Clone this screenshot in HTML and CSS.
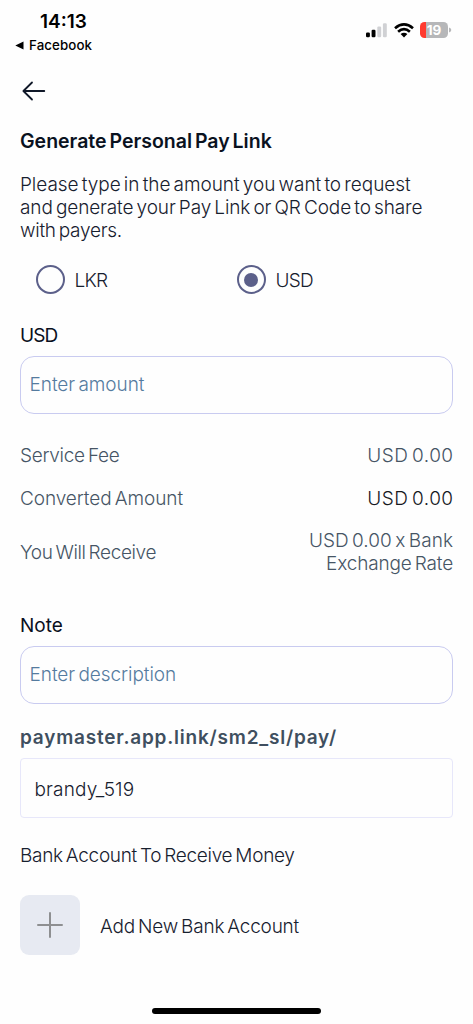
FILE: index.html
```html
<!DOCTYPE html>
<html lang="en">
<head>
<meta charset="utf-8">
<title>Generate Personal Pay Link</title>
<link rel="stylesheet" href="styles.css">
</head>
<body>
<div class="screen">
  <header class="status">
    <div class="status-left">
      <div class="clock">14:13</div>
      <div class="back-app"><svg width="9" height="9" viewBox="0 0 9 9"><path d="M0.3 4.5 8.5 0.6V8.4Z" fill="#000"/></svg><span>Facebook</span></div>
    </div>
    <div class="status-right">
      <svg class="signal" width="21" height="15" viewBox="0 0 21 15"><rect x="0" y="9.4" width="3.9" height="4.8" rx="1.2" fill="#000"/><rect x="5.6" y="6.8" width="3.9" height="7.4" rx="1.2" fill="#000"/><rect x="11.3" y="3.6" width="3.9" height="10.6" rx="1.2" fill="#d0d1d4"/><rect x="16.9" y="0.2" width="3.9" height="14" rx="1.2" fill="#d0d1d4"/></svg>
      <svg class="wifi" width="20" height="15" viewBox="0 0 20 15"><g fill="none" stroke="#000" stroke-width="2.7"><path d="M1 5.2Q10-2.4 19 5.2"/><path d="M4.1 8.7Q10 3.6 15.9 8.7"/></g><path d="M6.6 11Q10 8.3 13.4 11L10 14.5Z" fill="#000"/></svg>
      <div class="battery"><span>19</span></div>
      <svg class="tip" width="3" height="6" viewBox="0 0 3 6"><path d="M0 0.5Q2.3 1.3 2.3 3T0 5.5Z" fill="#b6b7b9"/></svg>
    </div>
  </header>
  <nav class="nav"><svg width="24" height="20" viewBox="0 0 24 20"><path d="M22.3 10H1.6M10 1.5 1.4 10 10 18.5" fill="none" stroke="#101828" stroke-width="1.8" stroke-linecap="round" stroke-linejoin="round"/></svg></nav>
  <main class="content">
    <h1 class="title">Generate Personal Pay Link</h1>
    <p class="intro"><span class="intro-a">Please type in the amount you want to request</span><br><span class="intro-b">and generate your Pay Link or QR Code to share</span><br><span class="intro-c">with payers.</span></p>
    <div class="radios">
      <div class="radio"><i class="ring"></i><span class="caps">LKR</span></div>
      <div class="radio"><i class="ring on"></i><span class="caps">USD</span></div>
    </div>
    <div class="label currency">USD</div>
    <div class="field"><span>Enter amount</span></div>
    <div class="row fee"><span class="k-fee">Service Fee</span><span class="money">USD 0.00</span></div>
    <div class="row converted"><span class="k-conv">Converted Amount</span><span class="money dark">USD 0.00</span></div>
    <div class="row receive"><span class="k-recv">You Will Receive</span><span class="rate"><span class="rate-a">USD 0.00 x Bank</span><br><span class="rate-b">Exchange Rate</span></span></div>
    <div class="label note">Note</div>
    <div class="field"><span>Enter description</span></div>
    <div class="link">paymaster.app.link/sm2_sl/pay/</div>
    <div class="handle"><span>brandy_519</span></div>
    <div class="bank-title">Bank Account To Receive Money</div>
    <div class="add"><div class="plus"><svg width="26" height="26" viewBox="0 0 26 26"><path d="M13 1V25M1 13H25" stroke="#8e8f91" stroke-width="2" stroke-linecap="round"/></svg></div><span class="add-text">Add New Bank Account</span></div>
  </main>
  <div class="home"></div>
</div>
</body>
</html>
```
FILE: styles.css
```css
* { box-sizing: border-box; }
body { margin: 0; background: #fefefe; }
.screen { width: 473px; height: 1024px; display: flex; flex-direction: column; font: 340 19px/23px Inter, "Liberation Sans", sans-serif; color: #17202e; word-spacing: -2px; white-space: nowrap; overflow: hidden; }
.status { height: 60px; display: flex; justify-content: space-between; padding: 10px 21px 0 15px; color: #000; }
.clock { font-size: 19px; font-weight: 600; padding-left: 25px; line-height: 24px; }
.back-app { display: flex; align-items: center; gap: 5px; font-size: 13.3px; font-weight: 500; line-height: 22px; letter-spacing: .1px; }
.status-right { display: flex; height: 40px; align-items: center; }
.wifi { margin-left: 7px; }
.battery { margin-left: 6px; width: 28px; height: 16px; border-radius: 4.5px; background: linear-gradient(to right, #ff3b30 6px, #b6b7b9 6px); color: #fff; font-size: 13.5px; font-weight: 700; line-height: 16px; text-align: center; }
.tip { margin-left: 1px; }
.nav { height: 70px; padding: 21px 0 0 22px; }
.nav svg { display: block; }
.content { padding: 0 20px; flex: 1; }
.title { margin: 0; font-size: 19.5px; font-weight: 600; line-height: 23px; color: #0a121f; }
.intro { margin: 20px 0 0; }
.intro-a { letter-spacing: -.06px; }
.intro-b { letter-spacing: -.12px; }
.intro-c { letter-spacing: -.27px; }
.radios { display: grid; grid-template-columns: 201px 1fr; margin-top: 23px; padding-left: 15.5px; }
.radio { display: flex; align-items: center; gap: 10px; height: 29px; }
.radio span { padding-top: 2px; }
.caps { letter-spacing: -.7px; }
.ring { width: 29px; height: 29px; border: 2px solid #5c608a; border-radius: 50%; display: grid; place-items: center; }
.on::after { content: ""; width: 14px; height: 14px; border-radius: 50%; background: #5c608a; }
.label { margin-top: 30px; font-weight: 400; color: #0a0f20; }
.currency { letter-spacing: -.9px; }
.field { margin-top: 9px; height: 58px; border: 1px solid #c9cbf0; border-radius: 14px; padding: 16px 8.5px 0; color: #557b9f; letter-spacing: -.05px; }
.row { display: flex; justify-content: space-between; align-items: center; color: #465565; }
.fee { margin-top: 30px; }
.converted { margin-top: 20px; }
.receive { margin-top: 19px; }
.k-fee { letter-spacing: -.28px; }
.k-conv { letter-spacing: -.08px; }
.k-recv { letter-spacing: -.38px; }
.row .money { letter-spacing: .45px; margin-right: -.5px; }
.rate { text-align: right; }
.rate-a { letter-spacing: .05px; }
.rate-b { letter-spacing: -.17px; }
.dark { color: #17191f; }
.note { margin-top: 39px; }
.link { margin-top: 22px; font-weight: 600; color: #3f4f5f; letter-spacing: .78px; }
.handle { margin-top: 9px; height: 60px; border: 1px solid #e7e7fa; border-radius: 4px; padding: 19px 13.5px; letter-spacing: .15px; }
.bank-title { margin-top: 26px; letter-spacing: -.3px; }
.add { margin-top: 28px; display: flex; align-items: center; gap: 20px; }
.add-text { letter-spacing: -.22px; padding-top: 2px; }
.plus { width: 60px; height: 60px; border-radius: 9px; background: #e7eaf2; display: grid; place-items: center; }
.home { width: 169px; height: 6px; border-radius: 3px; background: #000; margin: 0 auto 10px; flex: none; }
```
